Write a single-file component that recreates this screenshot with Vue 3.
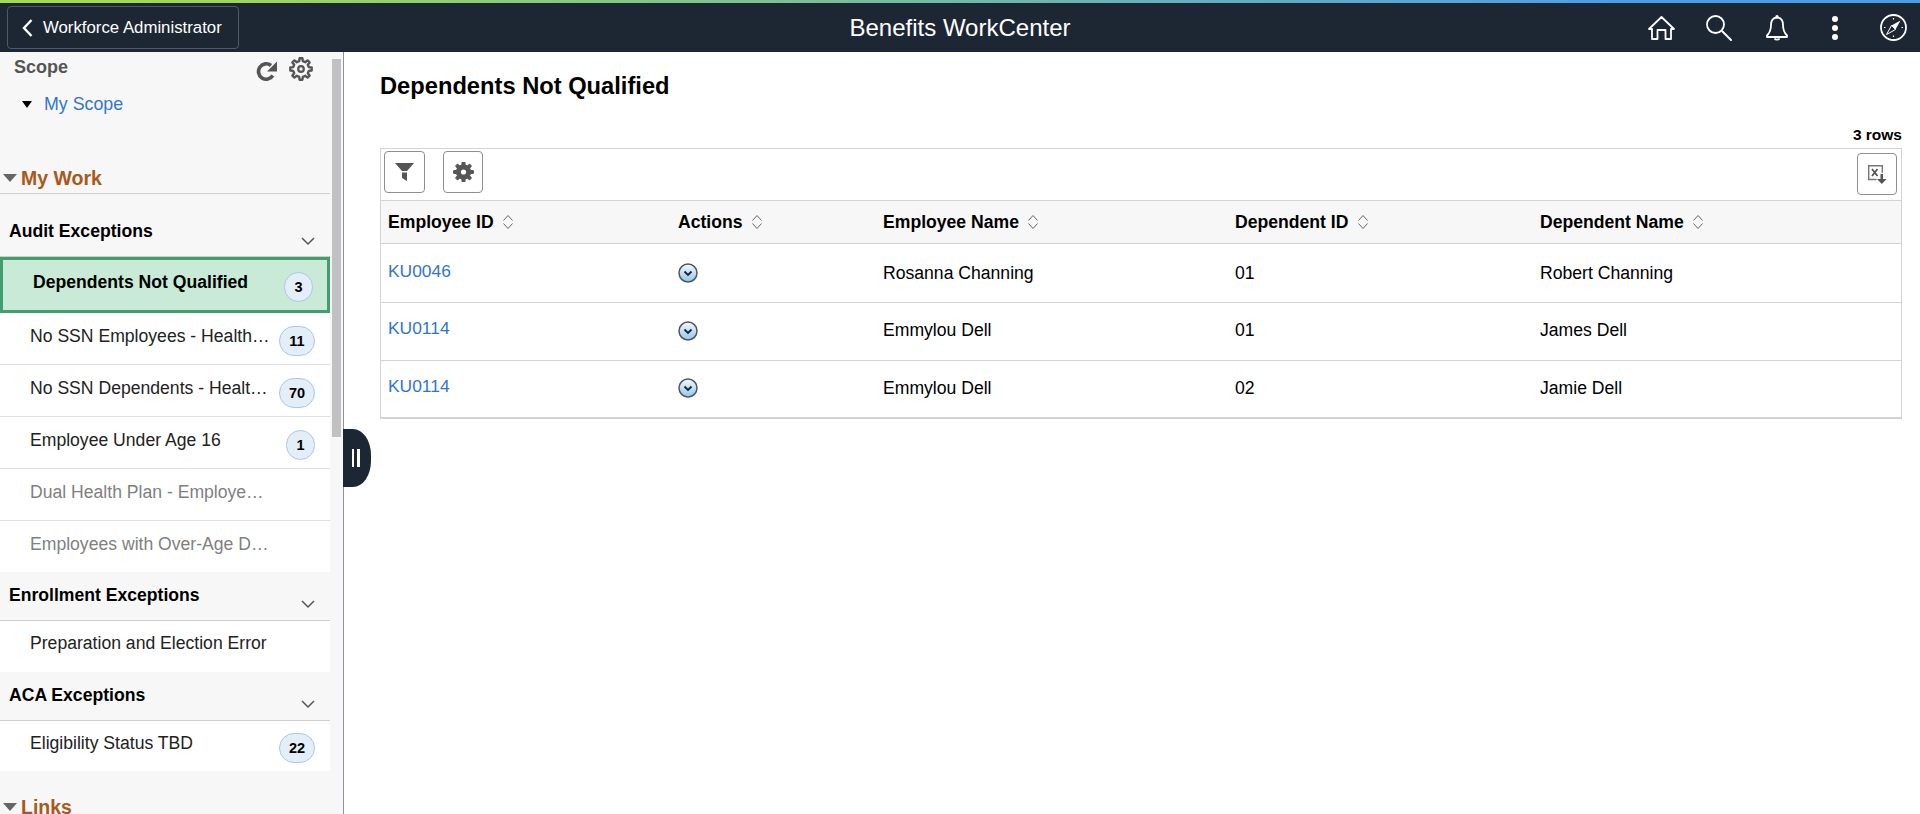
<script setup>
const tasks = [
  { label: 'No SSN Employees - Health…', count: 11, cls: '' },
  { label: 'No SSN Dependents - Healt…', count: 70, cls: '' },
  { label: 'Employee Under Age 16', count: 1, cls: '' },
  { label: 'Dual Health Plan - Employe…', cls: 'muted' },
  { label: 'Employees with Over-Age D…', cls: 'muted end' },
]
const columns = [
  { label: 'Employee ID', cls: 'c1' },
  { label: 'Actions', cls: 'c2' },
  { label: 'Employee Name', cls: 'c3' },
  { label: 'Dependent ID', cls: 'c4' },
  { label: 'Dependent Name', cls: 'c5' },
]
const rows = [
  { id: 'KU0046', emp: 'Rosanna Channing', dep: '01', name: 'Robert Channing', h: 'r1' },
  { id: 'KU0114', emp: 'Emmylou Dell', dep: '01', name: 'James Dell', h: 'r2' },
  { id: 'KU0114', emp: 'Emmylou Dell', dep: '02', name: 'Jamie Dell', h: 'r3' },
]
function gearPath(cx, cy, outer, inner, teeth) {
  const step = (Math.PI * 2) / teeth
  let d = ''
  for (let i = 0; i < teeth; i++) {
    const a = i * step - Math.PI / 2
    const pts = [
      [inner, a - step * 0.3],
      [outer, a - step * 0.17],
      [outer, a + step * 0.17],
      [inner, a + step * 0.3],
    ]
    for (const [r, t] of pts) {
      d += (d ? 'L' : 'M') + (cx + r * Math.cos(t)).toFixed(2) + ' ' + (cy + r * Math.sin(t)).toFixed(2)
    }
  }
  return d + 'Z'
}
const scopeGear = gearPath(12, 12, 10.8, 8, 8)
const toolGear = gearPath(10.5, 10, 10, 7.2, 8)
</script>

<template>
  <div class="page">
    <div class="stripe"></div>
    <header class="banner">
      <button class="back">
        <svg width="11" height="18" viewBox="0 0 11 18"><path d="M9.500 1 2 9l7.500 8" fill="none" stroke="#fff" stroke-width="2.400"/></svg>
        <span>Workforce Administrator</span>
      </button>
      <div class="title">Benefits WorkCenter</div>
      <div class="icons">
        <span class="slot"><svg width="27" height="24" viewBox="0 0 27 24" fill="none" stroke="#fff" stroke-width="1.800" stroke-linejoin="round"><path d="M1 13 13.500 1 26 13h-3v10h-5.500v-9h-8v9H4V13z"/></svg></span>
        <span class="slot"><svg width="26" height="26" viewBox="0 0 26 26" fill="none" stroke="#fff" stroke-width="1.800"><circle cx="9.500" cy="9.500" r="8.500"/><path d="M16 16l9 9" stroke-linecap="round" stroke-width="2"/></svg></span>
        <span class="slot"><svg width="22" height="26" viewBox="0 0 22 26" fill="none" stroke="#fff" stroke-width="1.800" stroke-linejoin="round"><path d="M11 2.500c-4.500 0-6 3.500-6 7.500 0 5-1.500 8-4 10.500v1.500h20v-1.500c-2.500-2.500-4-5.500-4-10.500 0-4-1.500-7.500-6-7.500z"/><circle cx="11" cy="1.800" r=".8" fill="#fff"/><path d="M8.500 23.500c1 1.600 4 1.600 5 0"/></svg></span>
        <span class="slot"><svg width="6" height="24" viewBox="0 0 6 24" fill="#fff"><circle cx="3" cy="3" r="3"/><circle cx="3" cy="12" r="3"/><circle cx="3" cy="21" r="3"/></svg></span>
        <span class="slot"><svg width="27" height="27" viewBox="0 0 27 27" fill="none" stroke="#fff"><circle cx="13.500" cy="13.500" r="12.500" stroke-width="1.800"/><path d="M20.500 6.500 15.500 15.500 11.500 11.500z" fill="#fff" stroke="none"/><path d="M6.500 20.500 11.500 11.500 15.500 15.500z" stroke-width="1"/><path d="M13.500 4v1.500M13.500 21.500V23M4 13.500h1.500M21.500 13.500H23" stroke-width="1.200"/></svg></span>
      </div>
    </header>

    <div class="body">
      <aside class="side">
        <nav class="nav">
          <div class="scope">
            <div class="scope-head">
              <span>Scope</span>
              <span class="scope-tools">
                <svg class="refresh" width="21" height="21" viewBox="0 0 21 21"><path d="M16.800 15.500A7.700 7.700 0 1 1 15 5.500" fill="none" stroke="#555" stroke-width="3.600"/><path d="M21 1.500V11.500h-10z" fill="#555"/></svg>
                <svg width="24" height="24" viewBox="0 0 24 24" fill="none" stroke="#555"><path :d="scopeGear" stroke-width="2.400" stroke-linejoin="round"/><circle cx="12" cy="12" r="2.800" stroke-width="2.200"/></svg>
              </span>
            </div>
            <div class="scope-link"><i class="tri small"></i><a>My Scope</a></div>
          </div>

          <h2 class="group"><i class="tri"></i>My Work</h2>

          <div class="sec sec-audit"><b>Audit Exceptions</b><svg class="chev" width="16" height="10" viewBox="0 0 16 10"><path d="M2 2l6 6 6-6" fill="none" stroke="#555" stroke-width="1.500"/></svg></div>
          <div class="item current"><span>Dependents Not Qualified</span><em class="badge">3</em></div>
          <div v-for="t in tasks" :key="t.label" class="item" :class="t.cls">
            <span>{{ t.label }}</span><em v-if="t.count" class="badge" :class="{ pill: t.count > 9 }">{{ t.count }}</em>
          </div>

          <div class="sec"><b>Enrollment Exceptions</b><svg class="chev" width="16" height="10" viewBox="0 0 16 10"><path d="M2 2l6 6 6-6" fill="none" stroke="#555" stroke-width="1.500"/></svg></div>
          <div class="item last"><span>Preparation and Election Error</span></div>

          <div class="sec"><b>ACA Exceptions</b><svg class="chev" width="16" height="10" viewBox="0 0 16 10"><path d="M2 2l6 6 6-6" fill="none" stroke="#555" stroke-width="1.500"/></svg></div>
          <div class="item last aca"><span>Eligibility Status TBD</span><em class="badge pill">22</em></div>

          <h2 class="group links"><i class="tri"></i>Links</h2>
        </nav>
        <div class="scrollbar"><div class="thumb"></div></div>
        <div class="handle"><i></i><i></i></div>
      </aside>

      <main class="main">
        <h1>Dependents Not Qualified</h1>
        <div class="count">3 rows</div>
        <section class="grid">
          <div class="toolbar">
            <button class="tool">
              <svg width="19" height="18" viewBox="0 0 19 18" fill="#555"><path d="M0 0h19l-7 8H7z"/><path d="M7 9.500h5V18l-5-3z"/></svg>
            </button>
            <button class="tool gear">
              <svg width="21" height="20" viewBox="0 0 21 20"><path :d="toolGear" fill="#555" stroke="#555" stroke-linejoin="round"/><circle cx="10.500" cy="10" r="2.600" fill="#fff"/></svg>
            </button>
            <button class="tool excel">
              <svg width="19" height="19" viewBox="0 0 19 19" fill="none"><path d="M8.500 14.500H.7V.7h13.600v7" stroke="#777" stroke-width="1.400"/><path d="M4 4l5.500 7M9.500 4 4 11" stroke="#555" stroke-width="1.800"/><path d="M12.500 9h2.500v5h3.500l-4.700 5-4.800-5h3.500z" fill="#555"/></svg>
            </button>
          </div>
          <div class="row head">
            <div v-for="c in columns" :key="c.label" class="cell" :class="c.cls">
              <b>{{ c.label }}</b>
              <svg width="12" height="16" viewBox="0 0 12 16" fill="none" stroke="#666" stroke-width="1"><path d="M1.500 6.500 6 1.500l4.500 5M1.500 9.500l4.500 5 4.500-5"/></svg>
            </div>
          </div>
          <div v-for="(r, i) in rows" :key="i" class="row data" :class="r.h">
            <div class="cell c1"><a>{{ r.id }}</a></div>
            <div class="cell c2">
              <svg width="20" height="20" viewBox="0 0 20 20">
                <defs><linearGradient :id="'act' + i" x1="0" y1="0" x2="0" y2="1"><stop offset="0" stop-color="#f4f9fd"/><stop offset="1" stop-color="#8cc8f4"/></linearGradient></defs>
                <circle cx="10" cy="10" r="9" :fill="`url(#act${i})`" stroke="#555" stroke-width="1.500"/>
                <path d="M6.500 8.500 10 12l3.500-3.500" fill="none" stroke="#222" stroke-width="1.800"/>
              </svg>
            </div>
            <div class="cell c3">{{ r.emp }}</div>
            <div class="cell c4">{{ r.dep }}</div>
            <div class="cell c5">{{ r.name }}</div>
          </div>
        </section>
      </main>
    </div>
  </div>
</template>

<style>
html, body { margin: 0; background: #fff; overflow: hidden; }
</style>

<style scoped>
.page { height: 814px; overflow: hidden; display: flex; flex-direction: column; font-family: "Liberation Sans", Arial, sans-serif; color: #000; }
.stripe { height: 3px; flex: none; background: linear-gradient(90deg, #a5dc4b 5%, #4b9fea 84%); }
.banner { height: 49px; background: #1d2733; display: flex; align-items: center; position: relative; flex: none; }
.back { margin-left: 7px; width: 232px; height: 43px; box-sizing: border-box; background: transparent; border: 1px solid #4f5a68; border-radius: 4px; color: #fff; display: flex; align-items: center; gap: 10px; padding: 0 0 0 14px; font: 16.800px "Liberation Sans", Arial, sans-serif; white-space: nowrap; }
.title { position: absolute; left: 0; right: 0; text-align: center; font-size: 24px; color: #fff; pointer-events: none; }
.icons { margin-left: auto; margin-right: -2px; display: flex; align-items: center; }
.slot { width: 58px; display: flex; justify-content: center; align-items: center; }
.body { flex: 1; display: flex; min-height: 0; }
.side { width: 344px; flex: none; box-sizing: border-box; background: #f7f7f7; border-right: 1px solid #8a939c; position: relative; display: flex; }
.scrollbar { width: 9px; margin: 7px 0 0 2px; flex: none; }
.thumb { height: 378px; background: #c1c1c1; }
.nav { width: 330px; flex: none; }
.scope { height: 114px; }
.scope-head { display: flex; justify-content: space-between; padding: 5px 17px 0 14px; height: 30px; box-sizing: border-box; font-size: 18px; font-weight: bold; color: #555; }
.scope-tools { display: flex; gap: 12px; align-items: flex-start; }
.refresh { margin-top: 3px; }
.scope-link { display: flex; align-items: center; padding: 12px 0 0 22px; font-size: 17.800px; }
.scope-link a { color: #2f76d2; margin-left: 12px; }
.tri { display: inline-block; width: 0; height: 0; border-left: 7px solid transparent; border-right: 7px solid transparent; border-top: 8px solid #666; margin: 0 4px 0 3px; }
.tri.small { border-left-width: 5.500px; border-right-width: 5.500px; border-top: 7px solid #000; margin: 0; }
.group { margin: 0; height: 28px; padding-bottom: 4px; box-sizing: border-box; border-bottom: 1px solid #d0d0d0; font-size: 19.500px; line-height: 24px; color: #a85a1a; display: flex; align-items: center; }
.group.links { border: 0; margin-top: 24px; }
.sec { height: 49px; box-sizing: border-box; border-bottom: 1px solid #cfcfcf; display: flex; justify-content: space-between; padding: 13px 14px 0 9px; font-size: 17.600px; line-height: 20px; }
.sec-audit { height: 63px; padding-top: 27px; }
.sec .chev { margin-top: 14px; }
.sec-audit .chev { margin-top: 15px; }
.item { height: 52px; box-sizing: border-box; background: #fff; border-bottom: 1px solid #dfe1e3; display: flex; justify-content: space-between; padding: 13px 15px 0 30px; font-size: 17.600px; line-height: 20px; color: #222; white-space: nowrap; }
.item.current { height: 56px; background: #c8ead6; border: 3px solid #3f9f6e; font-weight: bold; padding: 12px 14px 0 30px; color: #000; }
.item.muted { color: #7f7f7f; }
.item.end { border-bottom: 0; height: 51px; }
.item.last { border-bottom: 0; height: 51px; padding-top: 12px; }
.item.aca { height: 50px; }
.badge { box-sizing: border-box; height: 30px; min-width: 29px; padding: 0 6px; border: 1px solid #a8c8e4; border-radius: 15px; background: #e4eef8; font-style: normal; font-weight: bold; font-size: 14.500px; line-height: 28px; text-align: center; color: #000; }
.badge.pill { min-width: 36px; }
.handle { position: absolute; left: 343px; top: 377px; width: 28px; height: 58px; background: #1d2733; border-radius: 0 18px 18px 0 / 0 26px 26px 0; display: flex; align-items: center; justify-content: center; gap: 3px; padding-right: 3px; box-sizing: border-box; }
.handle i { width: 2.500px; height: 18px; background: #fff; }
.main { flex: 1; min-width: 0; padding: 0 18px 0 36px; }
h1 { margin: 0; padding-top: 21px; font-size: 23.700px; line-height: 26px; white-space: nowrap; }
.count { margin-top: 28px; text-align: right; font-size: 15.500px; font-weight: bold; line-height: 16px; }
.grid { margin-top: 5px; border: 1px solid #d0d3d8; border-bottom-width: 2px; }
.toolbar { height: 51px; display: flex; align-items: flex-start; gap: 18px; padding: 2px 4px 0 3px; box-sizing: border-box; }
.tool { width: 41px; height: 42px; box-sizing: border-box; background: #fff; border: 1px solid #8f8f8f; border-radius: 4px; display: flex; align-items: center; justify-content: center; padding: 0; }
.tool.gear { width: 40px; }
.excel { margin-left: auto; margin-top: 2px; width: 40px; }
.row { display: flex; align-items: center; border-top: 1px solid #d0d3d8; font-size: 17.600px; box-sizing: border-box; }
.head { height: 43px; background: #f7f7f7; }
.head .cell { display: flex; align-items: center; gap: 8.500px; }
.r1 { height: 59px; }
.r2 { height: 58px; padding-bottom: 2px; }
.r3 { height: 57px; padding-bottom: 2px; }
.cell { box-sizing: border-box; padding-left: 7px; flex: none; }
.cell a { color: #2f76d2; font-size: 17.400px; position: relative; top: -2px; }
.c1 { width: 290px; }
.c2 { width: 205px; }
.c3 { width: 352px; }
.c4 { width: 305px; }
.c5 { flex: 1; }
.data .c2 svg { display: block; }
</style>
